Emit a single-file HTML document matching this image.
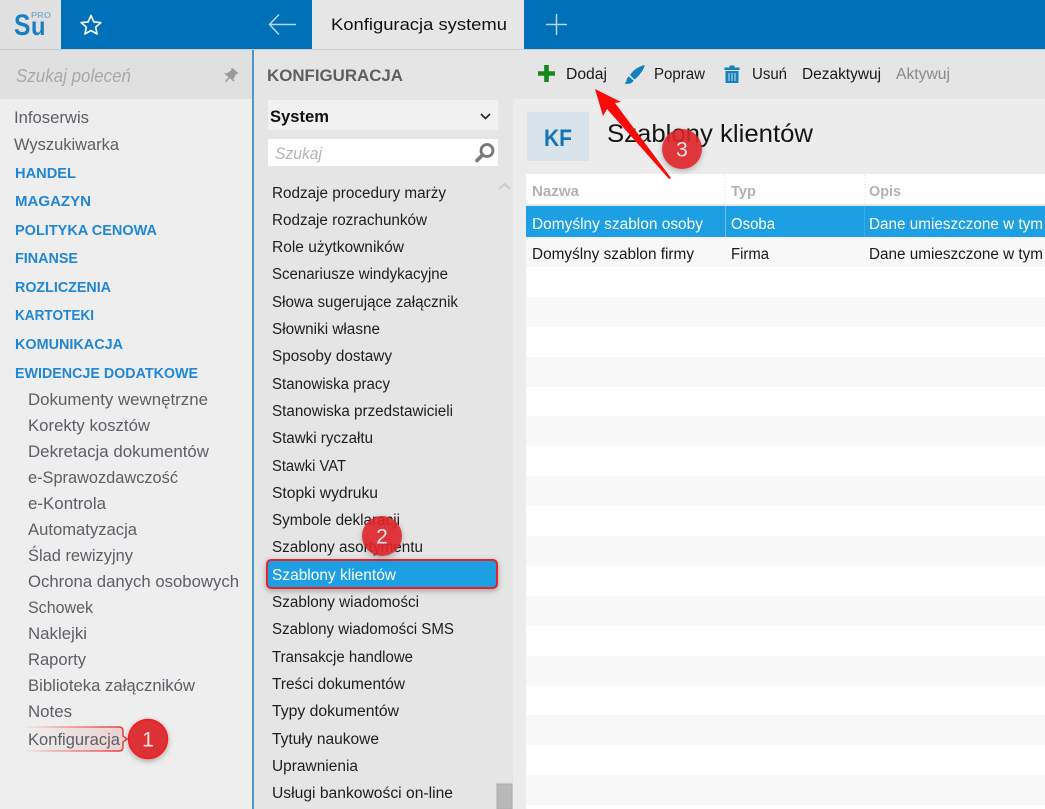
<!DOCTYPE html>
<html><head><meta charset="utf-8"><style>
html,body{margin:0;padding:0;background:#fff;width:1045px;height:809px;overflow:hidden}
svg{display:block;font-family:"Liberation Sans",sans-serif}
.l{font-size:16.5px;fill:#5b5f66}
.h{font-size:14.5px;font-weight:bold;fill:#1f87d6}
.m{font-size:15.5px;fill:#1e1e1e}
.t{font-size:15.5px;fill:#1a1a1a}
.th{font-size:14.5px;font-weight:bold;fill:#b2b2b2}
</style></head><body>
<svg width="1045" height="809" viewBox="0 0 1045 809" xmlns="http://www.w3.org/2000/svg">
<defs>
<filter id="sh" x="-40%" y="-40%" width="180%" height="180%"><feDropShadow dx="0" dy="2" stdDeviation="3" flood-color="#000" flood-opacity=".3"/></filter>
<linearGradient id="fade" x1="0" x2="1" y1="0" y2="0"><stop offset="0" stop-color="#ee2a2a" stop-opacity=".05"/><stop offset="1" stop-color="#ee2a2a" stop-opacity=".95"/></linearGradient>
<linearGradient id="fill" x1="0" x2="1" y1="0" y2="0"><stop offset="0" stop-color="#e05050" stop-opacity="0"/><stop offset="1" stop-color="#e05050" stop-opacity=".18"/></linearGradient>
</defs>
<rect width="1045" height="809" fill="#fff"/>
<!-- top bar -->
<rect width="1045" height="49" fill="#0070b9"/>
<rect x="0" width="61" height="49" fill="#e1e1e1"/>
<rect x="312" width="212" height="49" fill="#e6e6e6"/>
<rect y="49" width="1045" height="1" fill="#c9ced3"/>
<text x="14" y="35" font-size="30" font-weight="bold" fill="#1a7fc0" textLength="16.500" lengthAdjust="spacingAndGlyphs">S</text>
<text x="31" y="35" font-size="26" font-weight="bold" fill="#1a7fc0" textLength="14.500" lengthAdjust="spacingAndGlyphs">u</text>
<text x="31" y="18" font-size="8" font-weight="bold" fill="#7fb0d2" textLength="20" lengthAdjust="spacingAndGlyphs">PRO</text>
<path d="M91 15.500l2.900 6.400 6.900.7-5.200 4.600 1.500 6.800-6.100-3.500-6.100 3.500 1.500-6.800-5.200-4.600 6.900-.7z" fill="none" stroke="#fff" stroke-width="1.600" stroke-linejoin="round"/>
<path d="M296 24.500H270M279 14.500L269.500 24.500L279 34.500" fill="none" stroke="#b9d6ec" stroke-width="1.500"/>
<path d="M546 24.500H567M556.500 14V35" fill="none" stroke="#b9d6ec" stroke-width="1.500"/>
<text x="331" y="30" font-size="17" fill="#111" textLength="176" lengthAdjust="spacingAndGlyphs">Konfiguracja systemu</text>
<!-- left -->
<rect y="50" width="252" height="759" fill="#eeeeee"/>
<rect y="50" width="252" height="49" fill="#e0e0e0"/>
<rect x="252" y="50" width="2" height="759" fill="#4b98d1"/>
<text x="16" y="82" font-size="18" font-style="italic" fill="#a8a8a8" textLength="115" lengthAdjust="spacingAndGlyphs">Szukaj poleceń</text>
<g transform="translate(-2 1.500) rotate(40 232 75)" fill="#9a9a9a"><rect x="228" y="67" width="8" height="2"/><path d="M229 69h6l1.500 6h-9z"/><rect x="226" y="75" width="12" height="1.500"/><rect x="231.300" y="76" width="1.500" height="6"/></g>
<text class="l" lengthAdjust="spacingAndGlyphs" x="14" y="123" textLength="75">Infoserwis</text>
<text class="l" lengthAdjust="spacingAndGlyphs" x="14" y="150" textLength="105">Wyszukiwarka</text>
<text class="h" lengthAdjust="spacingAndGlyphs" x="15" y="178" textLength="61">HANDEL</text>
<text class="h" lengthAdjust="spacingAndGlyphs" x="15" y="206" textLength="76">MAGAZYN</text>
<text class="h" lengthAdjust="spacingAndGlyphs" x="15" y="235" textLength="142">POLITYKA CENOWA</text>
<text class="h" lengthAdjust="spacingAndGlyphs" x="15" y="263" textLength="63">FINANSE</text>
<text class="h" lengthAdjust="spacingAndGlyphs" x="15" y="292" textLength="96">ROZLICZENIA</text>
<text class="h" lengthAdjust="spacingAndGlyphs" x="15" y="320" textLength="79">KARTOTEKI</text>
<text class="h" lengthAdjust="spacingAndGlyphs" x="15" y="349" textLength="108">KOMUNIKACJA</text>
<text class="h" lengthAdjust="spacingAndGlyphs" x="15" y="378" textLength="183">EWIDENCJE DODATKOWE</text>
<text class="l" lengthAdjust="spacingAndGlyphs" x="28" y="405" textLength="180">Dokumenty wewnętrzne</text>
<text class="l" lengthAdjust="spacingAndGlyphs" x="28" y="431" textLength="122">Korekty kosztów</text>
<text class="l" lengthAdjust="spacingAndGlyphs" x="28" y="457" textLength="181">Dekretacja dokumentów</text>
<text class="l" lengthAdjust="spacingAndGlyphs" x="28" y="483" textLength="150">e-Sprawozdawczość</text>
<text class="l" lengthAdjust="spacingAndGlyphs" x="28" y="509" textLength="78">e-Kontrola</text>
<text class="l" lengthAdjust="spacingAndGlyphs" x="28" y="535" textLength="109">Automatyzacja</text>
<text class="l" lengthAdjust="spacingAndGlyphs" x="28" y="561" textLength="105">Ślad rewizyjny</text>
<text class="l" lengthAdjust="spacingAndGlyphs" x="28" y="587" textLength="211">Ochrona danych osobowych</text>
<text class="l" lengthAdjust="spacingAndGlyphs" x="28" y="613" textLength="65">Schowek</text>
<text class="l" lengthAdjust="spacingAndGlyphs" x="28" y="639" textLength="59">Naklejki</text>
<text class="l" lengthAdjust="spacingAndGlyphs" x="28" y="665" textLength="58">Raporty</text>
<text class="l" lengthAdjust="spacingAndGlyphs" x="28" y="691" textLength="167">Biblioteka załączników</text>
<text class="l" lengthAdjust="spacingAndGlyphs" x="28" y="717" textLength="44">Notes</text>
<rect x="26" y="727" width="97" height="24" fill="url(#fill)"/>
<path d="M26 727H119Q123 727 123 731V736L127 739L123 742V747Q123 751 119 751H26" fill="none" stroke="url(#fade)" stroke-width="1.500"/>
<text class="l" lengthAdjust="spacingAndGlyphs" x="28" y="745" textLength="92">Konfiguracja</text>
<!-- middle -->
<rect x="254" y="50" width="791" height="49" fill="#e5e5e5"/>
<rect x="254" y="99" width="259" height="710" fill="#e5e5e5"/>
<text x="267" y="81" font-size="16.500" font-weight="bold" fill="#5f5f5f" textLength="136" lengthAdjust="spacingAndGlyphs">KONFIGURACJA</text>
<rect x="268" y="100" width="230" height="30" fill="#f1f1f1"/>
<text x="270" y="122" font-size="17" font-weight="bold" fill="#111" textLength="59" lengthAdjust="spacingAndGlyphs">System</text>
<path d="M481 114l4.500 4.500 4.500-4.500" fill="none" stroke="#222" stroke-width="1.600"/>
<rect x="268" y="139" width="230" height="27" fill="#fff"/>
<text x="275" y="159" font-size="16.500" font-style="italic" fill="#b5b5b5" textLength="47" lengthAdjust="spacingAndGlyphs">Szukaj</text>
<circle cx="487" cy="150.500" r="6" fill="none" stroke="#777" stroke-width="2.800"/>
<path d="M482.500 155l-5.500 5.500" stroke="#777" stroke-width="3.600" stroke-linecap="round"/>
<path d="M499 189l5.500-5 5.500 5" fill="none" stroke="#cfcfcf" stroke-width="2.400"/>
<text class="m" lengthAdjust="spacingAndGlyphs" x="272" y="198" textLength="174">Rodzaje procedury marży</text>
<text class="m" lengthAdjust="spacingAndGlyphs" x="272" y="225" textLength="155">Rodzaje rozrachunków</text>
<text class="m" lengthAdjust="spacingAndGlyphs" x="272" y="252" textLength="132">Role użytkowników</text>
<text class="m" lengthAdjust="spacingAndGlyphs" x="272" y="279" textLength="176">Scenariusze windykacyjne</text>
<text class="m" lengthAdjust="spacingAndGlyphs" x="272" y="307" textLength="186">Słowa sugerujące załącznik</text>
<text class="m" lengthAdjust="spacingAndGlyphs" x="272" y="334" textLength="108">Słowniki własne</text>
<text class="m" lengthAdjust="spacingAndGlyphs" x="272" y="361" textLength="120">Sposoby dostawy</text>
<text class="m" lengthAdjust="spacingAndGlyphs" x="272" y="389" textLength="118">Stanowiska pracy</text>
<text class="m" lengthAdjust="spacingAndGlyphs" x="272" y="416" textLength="181">Stanowiska przedstawicieli</text>
<text class="m" lengthAdjust="spacingAndGlyphs" x="272" y="443" textLength="101">Stawki ryczałtu</text>
<text class="m" lengthAdjust="spacingAndGlyphs" x="272" y="471" textLength="74">Stawki VAT</text>
<text class="m" lengthAdjust="spacingAndGlyphs" x="272" y="498" textLength="106">Stopki wydruku</text>
<text class="m" lengthAdjust="spacingAndGlyphs" x="272" y="525" textLength="128">Symbole deklaracji</text>
<text class="m" lengthAdjust="spacingAndGlyphs" x="272" y="552" textLength="151">Szablony asortymentu</text>
<rect x="267" y="560" width="230" height="28" rx="4" fill="#1c9fe3" stroke="#e8202a" stroke-width="2" filter="url(#sh)"/>
<text class="m" lengthAdjust="spacingAndGlyphs" x="272" y="580" textLength="124" style="fill:#fff">Szablony klientów</text>
<text class="m" lengthAdjust="spacingAndGlyphs" x="272" y="607" textLength="147">Szablony wiadomości</text>
<text class="m" lengthAdjust="spacingAndGlyphs" x="272" y="634" textLength="182">Szablony wiadomości SMS</text>
<text class="m" lengthAdjust="spacingAndGlyphs" x="272" y="662" textLength="141">Transakcje handlowe</text>
<text class="m" lengthAdjust="spacingAndGlyphs" x="272" y="689" textLength="133">Treści dokumentów</text>
<text class="m" lengthAdjust="spacingAndGlyphs" x="272" y="716" textLength="127">Typy dokumentów</text>
<text class="m" lengthAdjust="spacingAndGlyphs" x="272" y="744" textLength="107">Tytuły naukowe</text>
<text class="m" lengthAdjust="spacingAndGlyphs" x="272" y="771" textLength="86">Uprawnienia</text>
<text class="m" lengthAdjust="spacingAndGlyphs" x="272" y="798" textLength="181">Usługi bankowości on-line</text>
<rect x="497" y="784" width="15" height="25" fill="#b8b8b8" stroke="#ababab"/>
<!-- toolbar -->
<path d="M546.500 65V82M538 73.500H555" stroke="#17871c" stroke-width="4.600"/>
<text class="t" lengthAdjust="spacingAndGlyphs" x="566" y="79" textLength="41">Dodaj</text>
<path d="M645 65C639 66 633 70 630 75L634.500 79.500C639 76 643 71 645 65ZM629 76.500C625.500 78 628 81 624.500 83.500C629 84.500 633 83 633.500 80.500Z" fill="#1481bf"/>
<text class="t" lengthAdjust="spacingAndGlyphs" x="654" y="79" textLength="51">Popraw</text>
<path d="M724.500 67.500H739.500V70H724.500ZM729.500 67.500V65.500H734.500V67.500ZM725.500 71H738.500V83H725.500Z" fill="#1481bf"/>
<path d="M729 73V81M732 73V81M735 73V81" stroke="#a8cfe6" stroke-width="1.200"/>
<text class="t" lengthAdjust="spacingAndGlyphs" x="752" y="79" textLength="35">Usuń</text>
<text class="t" lengthAdjust="spacingAndGlyphs" x="802" y="79" textLength="79">Dezaktywuj</text>
<text class="t" lengthAdjust="spacingAndGlyphs" x="896" y="79" textLength="54" style="fill:#8a8a8a">Aktywuj</text>
<!-- right panel -->
<rect x="513" y="99" width="532" height="710" fill="#ececec"/>
<rect x="527" y="112" width="62" height="49" fill="#d8e3eb"/>
<text x="544" y="146" font-size="24" font-weight="bold" fill="#1873b6" textLength="28" lengthAdjust="spacingAndGlyphs">KF</text>
<text x="607" y="142" font-size="25" fill="#151515" textLength="206" lengthAdjust="spacingAndGlyphs">Szablony klientów</text>
<rect x="526" y="174" width="519" height="635" fill="#fff"/>
<rect x="526" y="204" width="519" height="2" fill="#e6e6e6"/>
<path d="M725 175V205M865 175V205" stroke="#dcdcdc" stroke-dasharray="1 2"/>
<text class="th" lengthAdjust="spacingAndGlyphs" x="532" y="196" textLength="47">Nazwa</text>
<text class="th" lengthAdjust="spacingAndGlyphs" x="731" y="196" textLength="25">Typ</text>
<text class="th" lengthAdjust="spacingAndGlyphs" x="869" y="196" textLength="32">Opis</text>
<rect x="526" y="206" width="519" height="31" fill="#1c9fe3"/>
<path d="M725.500 206V237" stroke="#6fc2ee"/>
<path d="M864.500 206V237" stroke="#3aabe6"/>
<g fill="#f8f8f8">
<rect x="526" y="237" width="519" height="30"/>
<rect x="526" y="297" width="519" height="30"/>
<rect x="526" y="357" width="519" height="30"/>
<rect x="526" y="416" width="519" height="30"/>
<rect x="526" y="476" width="519" height="30"/>
<rect x="526" y="536" width="519" height="30"/>
<rect x="526" y="596" width="519" height="30"/>
<rect x="526" y="656" width="519" height="30"/>
<rect x="526" y="715" width="519" height="30"/>
<rect x="526" y="775" width="519" height="30"/>
</g>
<text class="t" lengthAdjust="spacingAndGlyphs" x="532" y="229" textLength="171" style="fill:#fff">Domyślny szablon osoby</text>
<text class="t" lengthAdjust="spacingAndGlyphs" x="731" y="229" textLength="44" style="fill:#fff">Osoba</text>
<text class="t" lengthAdjust="spacingAndGlyphs" x="869" y="229" textLength="174" style="fill:#fff">Dane umieszczone w tym</text>
<text class="t" lengthAdjust="spacingAndGlyphs" x="532" y="259" textLength="162">Domyślny szablon firmy</text>
<text class="t" lengthAdjust="spacingAndGlyphs" x="731" y="259" textLength="38">Firma</text>
<text class="t" lengthAdjust="spacingAndGlyphs" x="869" y="259" textLength="174">Dane umieszczone w tym</text>
<!-- annotations -->
<path d="M595 89L621 102L615 103L671 178L669 179L607 109L603 116Z" fill="#fb0a0a"/>
<g filter="url(#sh)"><circle cx="148" cy="739" r="19.500" fill="#dc3034" stroke="#f51c1c" stroke-width="1.500"/></g>
<text x="148" y="746.500" font-size="21" fill="#fbe4e4" text-anchor="middle">1</text>
<g filter="url(#sh)"><circle cx="382" cy="536" r="20" fill="#e02428" fill-opacity=".88"/></g>
<text x="382" y="543.500" font-size="21" fill="#fbe4e4" text-anchor="middle">2</text>
<g filter="url(#sh)"><circle cx="682" cy="149" r="20" fill="#e02428" fill-opacity=".88"/></g>
<text x="682" y="156.500" font-size="21" fill="#fbe4e4" text-anchor="middle">3</text>
</svg>
</body></html>
